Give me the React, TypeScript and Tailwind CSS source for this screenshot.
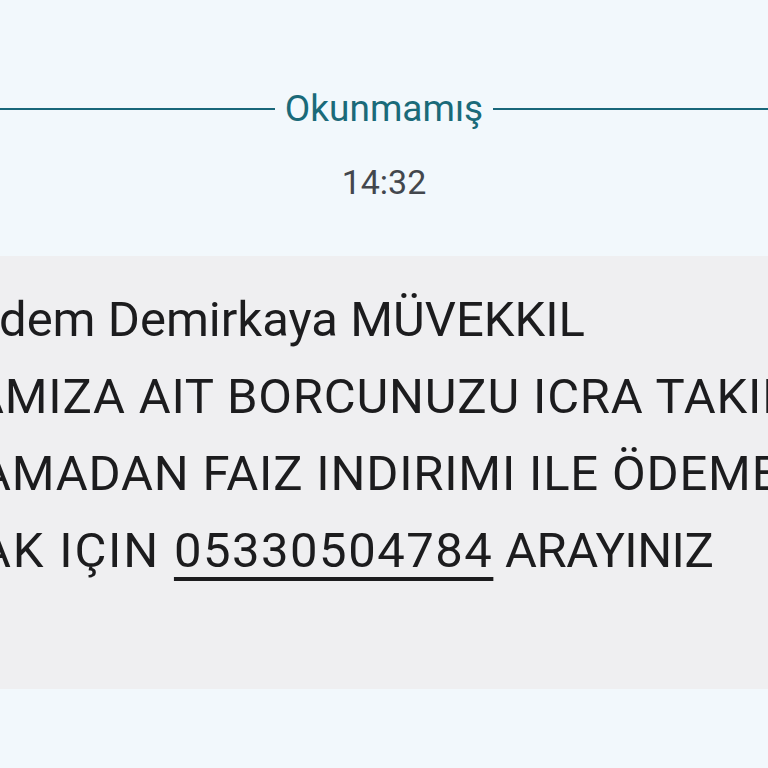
import React from "react";

export default function App() {
  return (
    <div
      className="w-[768px] h-[768px] overflow-hidden bg-[#f2f8fc]"
      style={{ fontFamily: "Roboto, 'Noto Sans', sans-serif" }}
    >
      <div className="pt-[87px] flex items-center gap-[10px]">
        <div className="flex-1 h-[2px] bg-[#19677a]" />
        <div className="text-[37px] leading-[44px] text-[#1a6a79]">Okunmamış</div>
        <div className="flex-1 h-[2px] bg-[#19677a]" />
      </div>
      <div className="mt-[31px] text-center text-[34px] leading-[40px] text-[#43474d]">14:32</div>
      <div className="mt-[54px] -ml-[40px] w-[900px] h-[433px] rounded-[28px] bg-[#efeff1] pl-[40px] pt-[25px] text-[49px] leading-[77px] text-[#1c1c1e] whitespace-nowrap">
        <div className="-ml-[1px]">dem Demirkaya MÜVEKKIL</div>
        <div className="-ml-[28px] tracking-[0.8px]">AMIZA AIT BORCUNUZU ICRA TAKIBI</div>
        <div className="-ml-[21px] tracking-[0.8px]">AMADAN FAIZ INDIRIMI ILE ÖDEMEK</div>
        <div className="-ml-[21px]">
          <span className="tracking-[1.8px]">AK IÇIN </span>
          <span className="underline decoration-[4px] underline-offset-[10px] tracking-[1.5px]">05330504784</span>
          <span className="tracking-[-0.5px]"> ARAYINIZ</span>
        </div>
      </div>
    </div>
  );
}
